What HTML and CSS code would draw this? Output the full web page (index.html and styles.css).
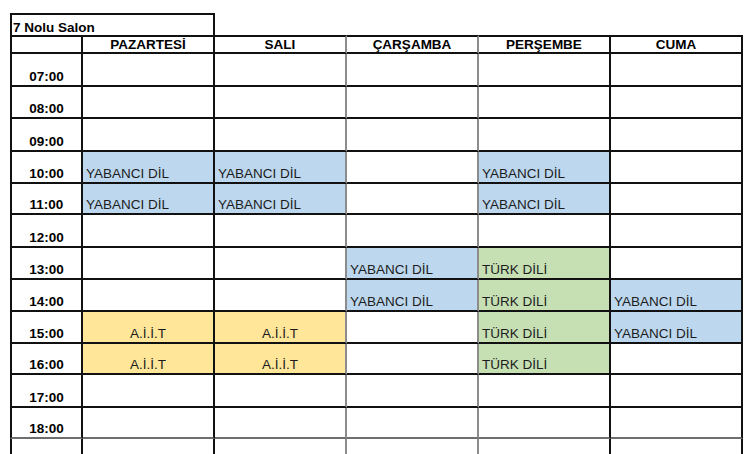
FILE: index.html
```html
<!DOCTYPE html>
<html lang="tr">
<head>
<meta charset="utf-8">
<title>7 Nolu Salon</title>
<link rel="stylesheet" href="styles.css">
</head>
<body>
<div class="sheet">
  <div class="title">7 Nolu Salon</div>
  <div class="spacer"></div>

  <div class="c t h"></div>
  <div class="c h">PAZARTESİ</div>
  <div class="c h gr">SALI</div>
  <div class="c h gr">ÇARŞAMBA</div>
  <div class="c h">PERŞEMBE</div>
  <div class="c h">CUMA</div>

  <div class="c t">07:00</div><div class="c"></div><div class="c gr"></div><div class="c gr"></div><div class="c"></div><div class="c"></div>
  <div class="c t">08:00</div><div class="c"></div><div class="c gr"></div><div class="c gr"></div><div class="c"></div><div class="c"></div>
  <div class="c t">09:00</div><div class="c"></div><div class="c gr"></div><div class="c gr"></div><div class="c"></div><div class="c"></div>
  <div class="c t">10:00</div><div class="c b">YABANCI DİL</div><div class="c gr b">YABANCI DİL</div><div class="c gr"></div><div class="c b">YABANCI DİL</div><div class="c"></div>
  <div class="c t">11:00</div><div class="c b">YABANCI DİL</div><div class="c gr b">YABANCI DİL</div><div class="c gr"></div><div class="c b">YABANCI DİL</div><div class="c"></div>
  <div class="c t">12:00</div><div class="c"></div><div class="c gr"></div><div class="c gr"></div><div class="c"></div><div class="c"></div>
  <div class="c t">13:00</div><div class="c"></div><div class="c gr"></div><div class="c gr b">YABANCI DİL</div><div class="c g">TÜRK DİLİ</div><div class="c"></div>
  <div class="c t">14:00</div><div class="c"></div><div class="c gr"></div><div class="c gr b">YABANCI DİL</div><div class="c g">TÜRK DİLİ</div><div class="c b">YABANCI DİL</div>
  <div class="c t">15:00</div><div class="c y">A.İ.İ.T</div><div class="c gr y">A.İ.İ.T</div><div class="c gr"></div><div class="c g">TÜRK DİLİ</div><div class="c b">YABANCI DİL</div>
  <div class="c t">16:00</div><div class="c y">A.İ.İ.T</div><div class="c gr y">A.İ.İ.T</div><div class="c gr"></div><div class="c g">TÜRK DİLİ</div><div class="c"></div>
  <div class="c t">17:00</div><div class="c"></div><div class="c gr"></div><div class="c gr"></div><div class="c"></div><div class="c"></div>
  <div class="c t lg">18:00</div><div class="c lg"></div><div class="c gr lg"></div><div class="c gr lg"></div><div class="c lg"></div><div class="c lg"></div>
  <div class="c t"></div><div class="c"></div><div class="c gr"></div><div class="c gr"></div><div class="c"></div><div class="c"></div>
</div>
</body>
</html>
```

FILE: styles.css
```css
html, body {
  margin: 0;
  padding: 0;
  overflow: hidden;
  background: #ffffff;
}

body {
  font-family: "Liberation Sans", Arial, sans-serif;
  font-size: 13.5px;
  color: #1c1c1c;
}

.sheet {
  display: grid;
  grid-template-columns: 73px repeat(5, 132px);
  grid-template-rows: 22px 19px 33px 32px 33px 32px 31px 33px 32px 32px 32px 31px 33px 31px 32px;
  padding: 13px 0 0 10px;
}

.title {
  grid-column: 1 / span 2;
  box-sizing: border-box;
  border: 2px solid #111;
  border-bottom: none;
  padding: 0 0 0 1px;
  display: flex;
  align-items: flex-end;
  font-weight: bold;
  color: #000;
  line-height: normal;
}

.spacer {
  grid-column: 3 / span 4;
}

.c {
  box-sizing: border-box;
  border-right: 2px solid #111;
  border-bottom: 2px solid #111;
  display: flex;
  align-items: flex-end;
  padding: 0 0 1px 3px;
  white-space: nowrap;
  overflow: hidden;
}

.c.gr {
  border-right-color: #8c8c8c;
}

.c.lg {
  border-bottom-color: #6e6e6e;
}

.t {
  border-left: 2px solid #111;
  justify-content: center;
  padding-left: 0;
  font-weight: bold;
  color: #000;
}

.h {
  border-top: 2px solid #111;
  justify-content: center;
  align-items: center;
  padding: 0;
  font-weight: bold;
  color: #000;
}

.b {
  background: #bdd7ee;
}

.g {
  background: #c6e0b4;
}

.y {
  background: #ffe699;
  justify-content: center;
  padding-left: 0;
}
```
